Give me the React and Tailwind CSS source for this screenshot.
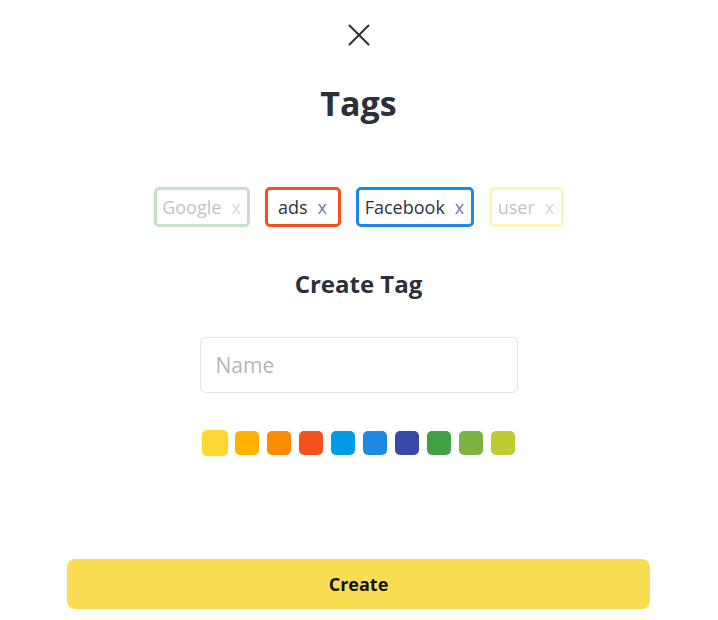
import React, { useState } from 'react';

const tags = [
  { id: 1, name: 'Google', color: '#43a047', width: 'w-[96px]', active: false },
  { id: 2, name: 'ads', color: '#f4511e', width: 'w-[76px]', active: true },
  { id: 3, name: 'Facebook', color: '#1e88e5', width: 'w-[118px]', active: true },
  { id: 4, name: 'user', color: '#fdd835', width: 'w-[75px]', active: false },
];

const colors = [
  '#fdd835',
  '#ffb300',
  '#fb8c00',
  '#f4511e',
  '#039be5',
  '#1e88e5',
  '#3949ab',
  '#43a047',
  '#7cb342',
  '#c0ca33',
];

const CloseIcon = () => (
  <svg width="22" height="22" viewBox="0 0 22 22" fill="none" stroke="#2d2f3a" strokeWidth="2" strokeLinecap="round">
    <path d="M1.5 1.5 L20.5 20.5" />
    <path d="M20.5 1.5 L1.5 20.5" />
  </svg>
);

const TagChip = ({ tag }) => (
  <div
    className={`${tag.width} h-[40px] border-[3px] rounded-[5px] flex items-center justify-center gap-[10px] text-[18px] ${
      tag.active ? '' : 'opacity-30'
    }`}
    style={{ borderColor: tag.color }}
  >
    <span className="text-[#2f3240] leading-none">{tag.name}</span>
    <button type="button" className="text-[#6e7bb0] leading-none">x</button>
  </div>
);

export default function App() {
  const [name, setName] = useState('');
  const [selected, setSelected] = useState(0);

  return (
    <div
      className="w-full h-[620px] bg-white pr-[1px] flex flex-col items-center text-[#2d2f3a]"
      style={{ fontFamily: '"Open Sans", "Noto Sans", sans-serif' }}
    >
      <button type="button" className="mt-[24px] w-[22px] h-[22px] flex items-center justify-center">
        <CloseIcon />
      </button>

      <h1 className="mt-[37px] text-[34px] leading-[40px] font-bold">Tags</h1>

      {/* existing tags */}
      <div className="mt-[64px] flex items-center gap-[15px]">
        {tags.map((tag) => (
          <TagChip key={tag.id} tag={tag} />
        ))}
      </div>

      <h2 className="mt-[41px] text-[24px] leading-[32px] font-bold">Create Tag</h2>

      <input
        value={name}
        onChange={(e) => setName(e.target.value)}
        placeholder="Name"
        className="mt-[37px] w-[318px] h-[56px] border border-[#e4e4ec] rounded-[6px] px-[15px] text-[21px] text-[#2f3240] placeholder:text-[#b5b5b8] outline-none"
      />

      {/* colour picker */}
      <div className="mt-[38px] flex items-center gap-[8px]">
        {colors.map((c, i) => (
          <button
            key={c}
            type="button"
            onClick={() => setSelected(i)}
            className={`w-[24px] h-[24px] rounded-[5px] ${selected === i ? 'scale-110' : ''}`}
            style={{ backgroundColor: c }}
          />
        ))}
      </div>

      <div className="mt-[104px] w-full px-[67px]">
        <button
          type="button"
          className="w-full h-[50px] bg-[#f9dd52] rounded-[8px] text-[18px] font-bold text-[#111111]"
        >
          Create
        </button>
      </div>
    </div>
  );
}
